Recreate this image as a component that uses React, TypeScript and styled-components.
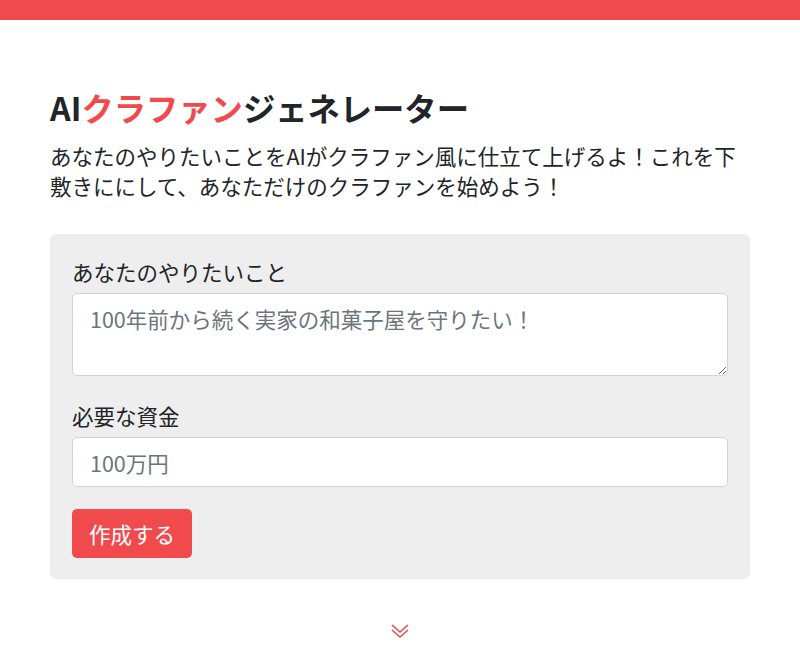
import React from 'react';
import styled, { createGlobalStyle } from 'styled-components';

const GlobalStyle = createGlobalStyle`
  body {
    margin: 0;
    font-family: "Noto Sans CJK JP", "Noto Sans", sans-serif;
    color: #212529;
    background: #fff;
  }
  * { box-sizing: border-box; }
`;

const red = '#f04a4c';

const TopBar = styled.div`
  height: 20px;
  background: ${red};
`;

const Container = styled.main`
  max-width: 700px;
  margin: 0 auto;
  padding: 63px 0 0;
`;

const Title = styled.h1`
  margin: 0;
  font-size: 32.3px;
  line-height: 48px;
  font-weight: 700;
`;

const Accent = styled.span`
  color: ${red};
`;

const Lead = styled.p`
  margin: 10px 0 0;
  font-size: 21.5px;
  line-height: 30px;
`;

const FormBox = styled.form`
  margin-top: 33px;
  background: #eeeeee;
  border-radius: 6px;
  padding: 22px 22px 21px;
  display: flex;
  flex-direction: column;
`;

const Label = styled.label<{ $gap?: number }>`
  display: block;
  font-size: 21.5px;
  line-height: 32px;
  margin-top: ${(p) => p.$gap ?? 0}px;
  margin-bottom: 5px;
`;

const fieldBase = `
  width: 100%;
  border: 1px solid #ced4da;
  border-radius: 5px;
  background: #fff;
  font-family: "Noto Sans CJK JP", "Noto Sans", sans-serif;
  font-size: 21.5px;
  line-height: 30px;
  color: #212529;
  padding: 10px 17px;
  &::placeholder { color: #6c757d; }
`;

const TextArea = styled.textarea`
  ${fieldBase}
  height: 83px;
  display: block;
  resize: vertical;
`;

const Input = styled.input`
  ${fieldBase}
  height: 50px;
  display: block;
`;

const Submit = styled.button`
  align-self: flex-start;
  margin-top: 22px;
  height: 49px;
  padding: 0 17px;
  border: none;
  border-radius: 5px;
  background: ${red};
  color: #fff;
  font-family: "Noto Sans CJK JP", "Noto Sans", sans-serif;
  font-size: 21.5px;
  cursor: pointer;
`;

const More = styled.div`
  display: flex;
  justify-content: center;
  padding-top: 44px;
`;

const Chevrons = () => (
  <svg width="20" height="16" viewBox="0 0 20 16" fill="none" stroke={red} strokeWidth="1.6">
    <polyline points="2,2 10,9 18,2" />
    <polyline points="2,7 10,14 18,7" />
  </svg>
);

export default function App() {
  return (
    <>
      <GlobalStyle />
      <TopBar />
      <Container>
        <Title>
          AI<Accent>クラファン</Accent>ジェネレーター
        </Title>
        <Lead>
          あなたのやりたいことをAIがクラファン風に仕立て上げるよ！これを下敷きににして、あなただけのクラファンを始めよう！
        </Lead>
        <FormBox onSubmit={(e) => e.preventDefault()}>
          <Label htmlFor="want">あなたのやりたいこと</Label>
          <TextArea id="want" placeholder="100年前から続く実家の和菓子屋を守りたい！" />
          <Label htmlFor="fund" $gap={24}>必要な資金</Label>
          <Input id="fund" placeholder="100万円" />
          <Submit type="submit">作成する</Submit>
        </FormBox>
        <More>
          <Chevrons />
        </More>
      </Container>
    </>
  );
}
